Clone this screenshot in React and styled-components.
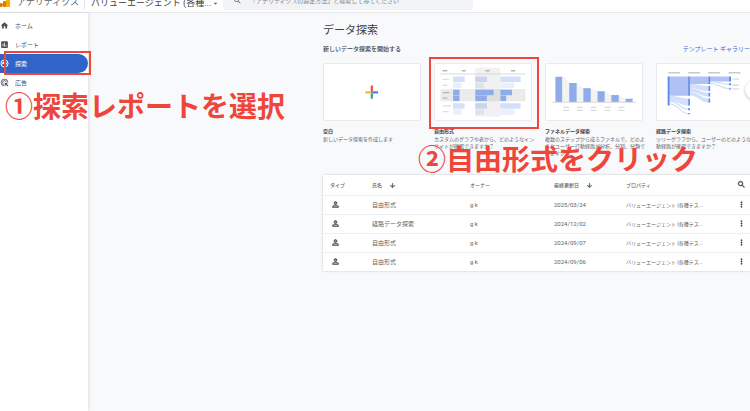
import React from 'react'
import styled, { createGlobalStyle } from 'styled-components'
import {
  MdHome,
  MdAssessment,
  MdAdsClick,
  MdSearch,
  MdArrowDropDown,
  MdArrowDownward,
  MdMoreVert,
  MdPersonOutline,
} from 'react-icons/md'

const GlobalStyle = createGlobalStyle`
  * {
    box-sizing: border-box;
  }
  body {
    margin: 0;
    background: #f8f9fb;
    color: #5f6368;
    font-family: Roboto, "Noto Sans CJK JP", sans-serif;
    font-size: 5px;
    overflow: hidden;
  }
  button, input {
    font-family: inherit;
  }
`

const Page = styled.div`
  position: relative;
  display: flex;
  flex-direction: column;
  min-height: 100vh;
  overflow: hidden;
`
const Header = styled.header`
  display: flex;
  align-items: flex-end;
  height: 13px;
  padding-bottom: 2px;
  background: #fff;
  border-bottom: 1px solid #e6e8eb;
  overflow: hidden;
`
const Logo = styled.svg`
  flex: none;
  width: 10px;
  height: 14px;
  margin-bottom: 3px;
`
const Brand = styled.span`
  width: 75px;
  padding-left: 7px;
  border-right: 1px solid #e3e5e8;
  font-size: 9px;
  line-height: 16px;
  white-space: nowrap;
`
const AccountButton = styled.button`
  display: flex;
  align-items: center;
  width: 138px;
  padding: 0 0 0 6px;
  border: none;
  background: none;
  color: #3c4043;
  font-size: 9px;
  line-height: 13px;
  white-space: nowrap;
  svg {
    width: 9px;
    height: 9px;
    color: #5f6368;
  }
`
const SearchBox = styled.label`
  display: flex;
  align-items: center;
  width: 250px;
  height: 20px;
  padding-left: 10px;
  border-radius: 3px;
  background: #f1f3f4;
  svg {
    flex: none;
    width: 9px;
    height: 9px;
  }
  input {
    flex: 1;
    min-width: 0;
    margin-left: 8px;
    padding: 0;
    border: none;
    background: none;
    font-size: 6px;
    outline: none;
  }
  input::placeholder {
    color: #80868b;
    opacity: 1;
  }
`

const Body = styled.div`
  display: flex;
  flex: 1;
`
const Sidebar = styled.nav`
  flex: none;
  width: 88px;
  padding-top: 3px;
  background: #fff;
  box-shadow: 1px 0 3px rgba(60, 64, 67, .14);
`
const NavLink = styled.a`
  display: flex;
  align-items: center;
  gap: 6px;
  height: 19px;
  border-radius: 0 10px 10px 0;
  background: ${props => (props.$active ? '#3064c8' : 'transparent')};
  color: ${props => (props.$active ? '#fff' : '#4d5156')};
  font-size: 6px;
  text-decoration: none;
  svg {
    width: 9px;
    height: 9px;
  }
`

const Main = styled.main`
  flex: 1;
  min-width: 0;
  padding: 10px 0 0 235px;
  overflow: hidden;
`
const Title = styled.h1`
  margin: 0;
  color: #3c4043;
  font-size: 11px;
  font-weight: 400;
  line-height: 16px;
`
const SubHeader = styled.div`
  display: flex;
  align-items: center;
  justify-content: space-between;
  height: 10px;
  margin-top: 4px;
`
const SubTitle = styled.h2`
  margin: 0;
  color: #3c4043;
  font-size: 6px;
  font-weight: 500;
`
const GalleryLink = styled.a`
  color: #3367d6;
  font-size: 6px;
  text-decoration: none;
`
const Carousel = styled.div`
  position: relative;
  height: 122px;
  padding-top: 10px;
`
const Cards = styled.div`
  display: grid;
  grid-auto-flow: column;
  grid-auto-columns: 98px;
  gap: 13px;
`
const Card = styled.button`
  display: flex;
  flex-direction: column;
  justify-content: flex-start;
  padding: 0;
  border: none;
  background: none;
  color: #5f6368;
  font-size: 5px;
  line-height: 7px;
  text-align: left;
  white-space: nowrap;
  cursor: pointer;
`
const Thumb = styled.svg`
  display: block;
  width: 98px;
  height: 58px;
  border: 1px solid #e8eaed;
  border-radius: 2px;
  background: #fff;
`
const CardTitle = styled.strong`
  margin: 6px 0 1px;
  color: #3c4043;
  font-weight: 700;
  line-height: 8px;
`
const CardText = styled.span`
  display: block;
`
const NextButton = styled.button`
  position: absolute;
  top: 28px;
  right: -13px;
  width: 18px;
  height: 18px;
  border: none;
  border-radius: 50%;
  background: #fff;
  box-shadow: 0 1px 3px rgba(60, 64, 67, .35);
`

const Table = styled.table`
  width: 100%;
  table-layout: fixed;
  border-collapse: collapse;
  background: #fff;
  box-shadow: 0 0 2px rgba(60, 64, 67, .3);
  svg {
    color: #3c4043;
  }
  svg path:not([fill="none"]) {
    stroke: currentColor;
    stroke-width: 1;
  }
`
const Col = styled.col`
  width: ${props => props.$width || 'auto'};
`
const Row = styled.tr`
  height: 19px;
  tbody & {
    border-top: 1px solid #eceef0;
  }
`
const HeadCell = styled.th`
  height: 20px;
  padding: 0;
  font-size: 5px;
  font-weight: 500;
  text-align: left;
  &:first-child {
    padding-left: 7px;
  }
  svg {
    width: 7px;
    height: 7px;
    margin-left: 7px;
    vertical-align: middle;
  }
`
const Cell = styled.td`
  padding: 0;
  font-size: ${props => (props.$small ? '5px' : '6px')};
  line-height: 8px;
  white-space: nowrap;
  &:first-child {
    padding-left: 8px;
  }
  svg {
    display: block;
    width: 9px;
    height: 9px;
  }
`
const IconButton = styled.button`
  display: block;
  padding: 0;
  border: none;
  background: none;
  svg {
    display: block;
    width: 9px;
    height: 9px;
    margin: 0;
  }
`

const Highlight = styled.div`
  position: absolute;
  left: ${props => props.$left}px;
  top: ${props => props.$top}px;
  width: ${props => props.$width}px;
  height: ${props => props.$height}px;
  border: 2px solid #ee463b;
  pointer-events: none;
`
const Callout = styled.p`
  position: absolute;
  left: ${props => props.$left}px;
  top: ${props => props.$top}px;
  margin: 0;
  color: #ee463b;
  font-family: "Noto Sans CJK JP", sans-serif;
  font-size: 28px;
  font-weight: 700;
  line-height: 36px;
  white-space: nowrap;
  pointer-events: none;
`

const ExploreIcon = () => (
  <svg viewBox="0 0 24 24" fill="none" stroke="currentColor" strokeWidth="2.6" aria-hidden="true">
    <circle cx="12" cy="12" r="9.5" />
    <path d="M3 16l6-6 5 5 7-7" />
    <circle cx="9" cy="10" r="1.6" fill="currentColor" />
    <circle cx="14" cy="15" r="1.6" fill="currentColor" />
  </svg>
)

const BlankThumb = () => (
  <Thumb viewBox="0 0 294 174" aria-hidden="true">
    <path d="M143 67h7v18l-7 7z" fill="#e8584c" />
    <path d="M126 85h17v7h-17z" fill="#f6bc2f" />
    <path d="M150 85h16v7h-23z" fill="#4d80e8" />
    <path d="M143 92h7v16h-7z" fill="#4aa564" />
  </Thumb>
)

const barRows = [
  { y: 63, widths: [36, 36, 63], fill: '#d3dffb' },
  { y: 82, widths: [26, 27, 43], fill: '#e8effd' },
  { y: 104, widths: [20, 57, 36], fill: '#8eabea' },
  { y: 122, widths: [20, 36, 18], fill: '#8eabea' },
  { y: 146, widths: [36, 36, 63], fill: '#d3dffb' },
  { y: 165, widths: [26, 27, 43], fill: '#e8effd' },
]
const barStarts = [81, 150, 228]

const FreeFormThumb = () => (
  <Thumb viewBox="27 24 294 174" aria-hidden="true">
    <path d="M42 102h264v38H42z" fill="#ebebeb" />
    <path d="M150 36h78v151h-78z" fill="#777" opacity=".1" />
    {barRows.map(row => row.widths.map((width, i) => (
      <rect key={`${row.y}-${i}`} x={barStarts[i]} y={row.y} width={width} height="17" fill={row.fill} />
    )))}
    <path d="M150 63h36v17h-36zM150 82h27v17h-27zM150 146h36v17h-36zM150 165h27v17h-27z" fill="#777" opacity=".1" />
    <path d="M42 55h264" stroke="#d8d8d8" strokeWidth="3" />
    <path d="M48 45h15M108 45h12M182 45h13M261 45h13" stroke="#b5b5b5" strokeWidth="4" />
    <path d="M49 72h19M49 90h14M49 154h26M49 172h18" stroke="#dedede" strokeWidth="4" />
    <path d="M49 113h21M49 130h14" stroke="#b5b5b5" strokeWidth="4" />
  </Thumb>
)

const FunnelThumb = () => (
  <Thumb viewBox="45 39 294 174" aria-hidden="true">
    <path
      d="M93 79h7l15 19h25l19 16h23l21 10h22l21 11h23l21 12v10H93z"
      fill="#f3f3f3"
    />
    <path
      d="M72 79h21v78H72zM115 98h23v59h-23zM159 114h23v43h-23zM203 124h22v33h-22zM246 135h23v22h-23zM290 147h22v10h-22z"
      fill="#8eabea"
    />
    <path d="M60 158h263" stroke="#d8d8d8" strokeWidth="3" />
    <path
      d="M96 174h19M96 183h19M139 174h18M139 183h18M182 174h18M182 183h18M225 174h18M225 183h18M268 174h19M268 183h19"
      stroke="#dcdcdc"
      strokeWidth="4"
    />
  </Thumb>
)

const PathThumb = () => (
  <Thumb viewBox="378 39 294 174" aria-hidden="true">
    <path d="M411 66h37M473 66h37M535 66h37M598 66h37" stroke="#c9c9c9" strokeWidth="5" />
    <path d="M414 78h61v60h-61zM478 78h59v23h-59zM540 78h61v15h-61z" fill="#aec3f3" />
    <path
      d="M414 138c30 0 35 9 60 9v21c-28 0-30-15-60-15zM478 101c28 0 32 6 59 6v16c-26 0-30-9-59-9zM478 114c28 0 32 14 59 14v12c-28 0-32-15-59-15zM478 126c28 0 32 20 59 20v13c-28 0-32-22-59-22z"
      fill="#d3dffb"
    />
    <path
      d="M414 154c30 0 32 26 60 26M414 163c30 0 32 30 60 30M540 94c28 0 32 8 61 8M540 99c28 0 32 16 61 16"
      fill="none"
      stroke="#d3dffb"
      strokeWidth="4"
    />
    <path
      d="M409 78h6v90h-6zM473 78h5v60h-5zM473 147h5v21h-5zM473 176h5v7h-5zM473 191h5v4h-5zM536 78h5v23h-5zM536 107h5v16h-5zM536 128h5v12h-5zM536 146h5v13h-5zM600 78h6v15h-6zM600 99h6v6h-6zM600 114h6v4h-6z"
      fill="#6088e5"
    />
    <path d="M610 86h21M610 105h21M610 116h21" stroke="#dcdcdc" strokeWidth="4" />
  </Thumb>
)

const navItems = [
  { label: 'ホーム', icon: MdHome },
  { label: 'レポート', icon: MdAssessment },
  { label: '探索', icon: ExploreIcon, active: true },
  { label: '広告', icon: MdAdsClick },
]

const cards = [
  { title: '空白', thumb: BlankThumb, lines: ['新しいデータ探索を作成します'] },
  {
    title: '自由形式',
    thumb: FreeFormThumb,
    lines: ['カスタムのグラフや表から、どのようなイン', 'サイトが確認できますか？'],
  },
  {
    title: 'ファネルデータ探索',
    thumb: FunnelThumb,
    lines: ['複数のステップから成るファネルで、どのよ', 'うなユーザー行動経路が分析、分割、分類で', 'きますか？'],
  },
  {
    title: '経路データ探索',
    thumb: PathThumb,
    lines: ['ツリーグラフから、ユーザーのどのような行', '動経路が確認できますか？'],
  },
]

const rows = [
  { name: '自由形式', date: '2025/03/24' },
  { name: '経路データ探索', date: '2024/12/02' },
  { name: '自由形式', date: '2024/09/07' },
  { name: '自由形式', date: '2024/09/06' },
]

const App = () => (
  <>
    <GlobalStyle />
    <Page>
      <Header>
        <Logo viewBox="0 0 10 14" aria-hidden="true">
          <circle cx="1" cy="12" r="2" fill="#e37400" />
          <rect x="3" y="8" width="3" height="6" rx="1" fill="#e37400" />
          <rect x="6" y="0" width="4" height="14" rx="1" fill="#f9ab00" />
        </Logo>
        <Brand>アナリティクス</Brand>
        <AccountButton type="button">
          バリューエージェント (各種...
          <MdArrowDropDown />
        </AccountButton>
        <SearchBox>
          <MdSearch />
          <input
            type="text"
            aria-label="検索"
            placeholder="「アナリティクスの設定方法」と検索してみてください"
          />
        </SearchBox>
      </Header>
      <Body>
        <Sidebar>
          {navItems.map(({ label, icon: Icon, active }) => (
            <NavLink key={label} href="#" $active={active}>
              <Icon />
              {label}
            </NavLink>
          ))}
        </Sidebar>
        <Main>
          <Title>データ探索</Title>
          <SubHeader>
            <SubTitle>新しいデータ探索を開始する</SubTitle>
            <GalleryLink href="#">テンプレート ギャラリー</GalleryLink>
          </SubHeader>
          <Carousel>
            <Cards>
              {cards.map(({ title, thumb: Picture, lines }) => (
                <Card key={title} type="button">
                  <Picture />
                  <CardTitle>{title}</CardTitle>
                  {lines.map(line => <CardText key={line}>{line}</CardText>)}
                </Card>
              ))}
            </Cards>
            <NextButton type="button" aria-label="次へ" />
          </Carousel>
          <Table>
            <colgroup>
              <Col $width="49px" />
              <Col $width="98px" />
              <Col $width="84px" />
              <Col $width="72px" />
              <Col />
              <Col $width="13px" />
            </colgroup>
            <thead>
              <Row>
                <HeadCell>タイプ</HeadCell>
                <HeadCell>氏名<MdArrowDownward /></HeadCell>
                <HeadCell>オーナー</HeadCell>
                <HeadCell>最終更新日<MdArrowDownward /></HeadCell>
                <HeadCell>プロパティ</HeadCell>
                <HeadCell>
                  <IconButton type="button" aria-label="検索"><MdSearch /></IconButton>
                </HeadCell>
              </Row>
            </thead>
            <tbody>
              {rows.map(row => (
                <Row key={row.date}>
                  <Cell><MdPersonOutline /></Cell>
                  <Cell>{row.name}</Cell>
                  <Cell>g k</Cell>
                  <Cell>{row.date}</Cell>
                  <Cell $small>バリューエージェント (各種テス...</Cell>
                  <Cell>
                    <IconButton type="button" aria-label="メニュー"><MdMoreVert /></IconButton>
                  </Cell>
                </Row>
              ))}
            </tbody>
          </Table>
        </Main>
      </Body>
      <Highlight $left={4} $top={51} $width={87} $height={24} />
      <Highlight $left={429} $top={57} $width={110} $height={72} />
      <Callout $left={5} $top={87}>①探索レポートを選択</Callout>
      <Callout $left={418} $top={140}>②自由形式をクリック</Callout>
    </Page>
  </>
)

export default App
